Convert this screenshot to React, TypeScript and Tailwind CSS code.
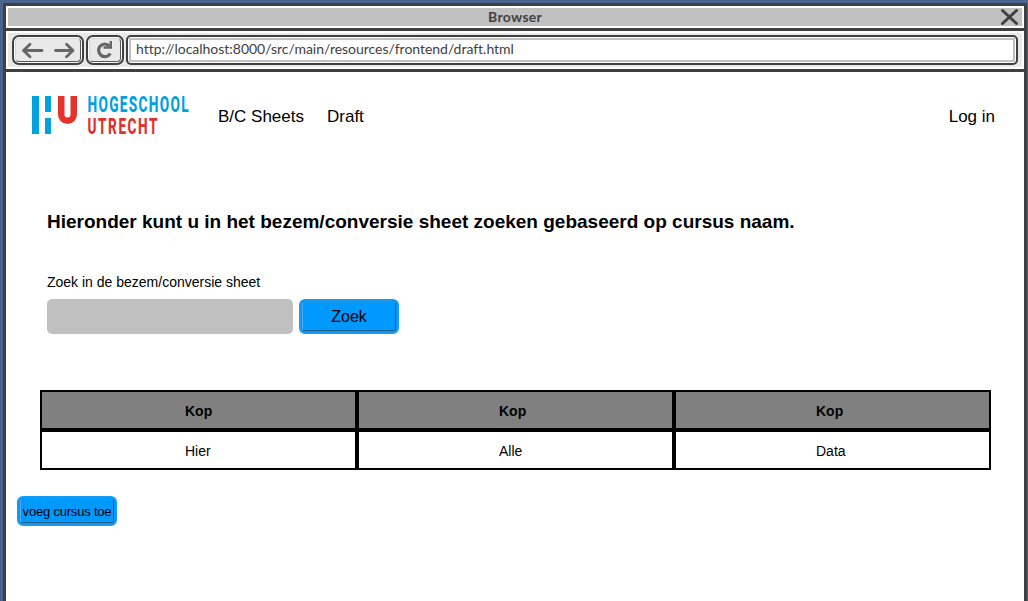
import React from "react";

const columns = [
  { head: "Kop", cell: "Hier", pad: "pl-[143px]" },
  { head: "Kop", cell: "Alle", pad: "pl-[140px]" },
  { head: "Kop", cell: "Data", pad: "pl-[140px]" },
];

function Logo() {
  return (
    <svg width="162" height="46" viewBox="0 -3 162 46" className="block overflow-visible">
      <g fill="#00a1df">
        <path d="M2 1h7v38H2zM15 1h6v16h-6zM15 23h6v16h-6z" />
      </g>
      <path d="M31.250 1v18.500a6.250 6.250 0 0 0 12.500 0V1" fill="none" stroke="#e5322d" strokeWidth="6.500" />
      <g fontFamily="Roboto, sans-serif" fontWeight="800" fontSize="22">
        <text transform="translate(57.500 17) scale(0.620 1)" textLength="163" lengthAdjust="spacing" fill="#00a1df">HOGESCHOOL</text>
        <text transform="translate(57.500 39) scale(0.620 1)" textLength="113" lengthAdjust="spacing" fill="#df312d">UTRECHT</text>
      </g>
    </svg>
  );
}

function BlueButton({ children, className }: { children: React.ReactNode; className: string }) {
  return (
    <button className={"rounded-[6px] border-2 border-[#149cf5] bg-[#0099ff] p-px text-black " + className}>
      <span className="flex h-full w-full items-center justify-center whitespace-nowrap rounded-[2px] border border-t-[#1798ef] border-r-[#075796] border-b-[#205f90] border-l-[#57a9e5]">
        {children}
      </span>
    </button>
  );
}

export default function App() {
  return (
    <div className="h-[601px] w-[1028px] overflow-hidden bg-[#48648f] pt-[3px] pr-px pl-[3px] font-['Liberation_Sans',Arial,sans-serif] text-black">
      <div className="flex h-[598px] flex-col border-x-[3px] border-t-[3px] border-[#404040] bg-white">
        <div className="flex h-[25px] shrink-0 border-b-[3px] border-[#404040] p-0.5">
          <div className="flex h-[18px] flex-1 items-center bg-[#c0c0c0] pl-[480px]">
            <span className="w-[56px] font-['Lato',sans-serif] text-[14px] leading-[18px] font-bold tracking-[0.3px] text-[#404040]">Browser</span>
            <svg width="18" height="18" viewBox="0 0 18 18" className="mr-1 ml-auto">
              <path d="M2.500 2.500l14 13M16.500 2.500L2.500 15.500" stroke="#404040" strokeWidth="3" strokeLinecap="round" />
            </svg>
          </div>
        </div>
        <div className="box-border h-[41px] shrink-0 border-b-[3px] border-[#404040] p-0.5">
          <div className="flex h-[34px] gap-0.5 bg-[#e9e9e9] py-0.5 pr-1 pl-1">
            <div className="h-[30px] w-[72px] rounded-[7px] border-2 border-[#404040] bg-white p-px">
              <div className="flex h-full items-center justify-center rounded-[4px] border border-[#d5d5d5] border-r-[#555555] border-b-[#555555] bg-[#e9e9e9]">
                <svg width="54" height="18" viewBox="0 0 54 18" fill="none" stroke="#666666" strokeWidth="2.800" strokeLinecap="round" strokeLinejoin="round">
                  <path d="M21 9.500H2.500M9 3.300L2.500 9.500L9 15.700M34.500 9.500H52M45.500 3.300L52 9.500L45.500 15.700" />
                </svg>
              </div>
            </div>
            <div className="h-[30px] w-[38px] rounded-[7px] border-2 border-[#404040] bg-white p-px">
              <div className="flex h-full items-center justify-center rounded-[4px] border border-[#d5d5d5] border-r-[#555555] border-b-[#555555] bg-[#e9e9e9]">
                <svg width="20" height="20" viewBox="0 0 20 20" fill="none" stroke="#666666">
                  <path d="M14.500 6A6.300 6.300 0 1 0 15.300 13.500" strokeWidth="3.200" />
                  <path d="M15.800 1V7.500H8.500" strokeWidth="2.400" />
                </svg>
              </div>
            </div>
            <div className="h-[30px] flex-1 rounded-[5px] border-2 border-[#404040] bg-white p-px">
              <div className="flex h-full items-center border-2 border-[#c0c0c0] bg-white pb-0.5 pl-[5px] font-['Lato',sans-serif] text-[14px] leading-[18px] tracking-[-0.02px] text-[#404040]">
                <span className="whitespace-nowrap">http://localhost:8000/src/main/resources/frontend/draft.html</span>
              </div>
            </div>
          </div>
        </div>
        <header className="mt-5 flex h-[46px] items-center pr-[29px] pl-6 text-[17px] leading-5">
          <Logo />
          <nav className="ml-[26px] flex gap-[23px] pt-[3px]">
            <a>B/C Sheets</a>
            <a>Draft</a>
          </nav>
          <a className="ml-auto pt-[3px]">Log in</a>
        </header>
        <main>
          <h1 className="mt-[73px] ml-[41px] text-[19px] leading-[22px] font-bold whitespace-nowrap">
            Hieronder kunt u in het bezem/conversie sheet zoeken gebaseerd op cursus naam.
          </h1>
          <div className="mt-[39px] ml-[41px] text-[14px] leading-5">
            <label className="block">Zoek in de bezem/conversie sheet</label>
            <div className="mt-[7px] flex gap-1.5">
              <input aria-label="Zoek" className="h-[35px] w-[246px] rounded-[5px] bg-[#c0c0c0] outline-none" />
              <BlueButton className="h-[35px] w-[100px] text-[16px]">Zoek</BlueButton>
            </div>
          </div>
          <div className="mt-14 ml-[34px] grid w-[951px] grid-cols-3 text-[14px]">
            {columns.map((c, i) => (
              <div key={i}>
                <div className={"flex h-10 items-center border-2 border-black bg-[#808080] pt-0.5 font-bold " + c.pad}>{c.head}</div>
                <div className={"flex h-10 items-center border-2 border-black bg-white pt-0.5 " + c.pad}>{c.cell}</div>
              </div>
            ))}
          </div>
          <BlueButton className="mt-[26px] ml-[11px] block h-[30px] w-[100px] text-[13px] leading-[22px] tracking-[-0.2px]">
            <span className="pt-0.5">voeg cursus toe</span>
          </BlueButton>
        </main>
      </div>
    </div>
  );
}
